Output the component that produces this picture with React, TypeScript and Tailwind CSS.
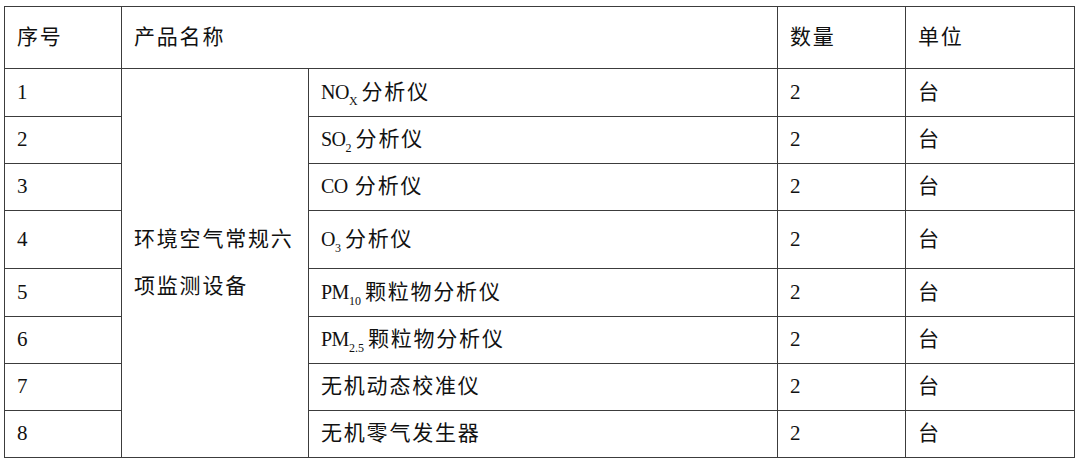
import React from 'react'

type Row = { no: number; name: React.ReactNode; h: string }

const lat = 'text-[20px] tracking-[-0.5px]'
const sub = 'text-[12px] relative top-[6px] leading-none tracking-[0px] mr-[4px]'

const rows: Row[] = [
  { no: 1, h: 'h-[48px]', name: <><span className={lat}>NO</span><span className={sub}>X</span>分析仪</> },
  { no: 2, h: 'h-[47px]', name: <><span className={lat}>SO</span><span className={sub}>2</span>分析仪</> },
  { no: 3, h: 'h-[47px]', name: <><span className={lat}>CO</span> 分析仪</> },
  { no: 4, h: 'h-[58px]', name: <><span className={lat}>O</span><span className={sub}>3</span>分析仪</> },
  { no: 5, h: 'h-[48px]', name: <><span className={lat}>PM</span><span className={sub}>10</span>颗粒物分析仪</> },
  { no: 6, h: 'h-[47px]', name: <><span className={lat}>PM</span><span className={sub}>2.5</span>颗粒物分析仪</> },
  { no: 7, h: 'h-[47px]', name: <>无机动态校准仪</> },
  { no: 8, h: 'h-[47px]', name: <>无机零气发生器</> },
]

const cell = 'border border-[#3c3c3c] px-[12px] align-middle text-left font-normal'

export default function App() {
  return (
    <div className="w-[1080px] h-[462px] bg-white pt-[6px] pl-[4px] text-[#111] text-[21px] tracking-[1.8px] font-['Liberation_Serif','Noto_Sans_CJK_SC',serif]">
      <table className="table-fixed border-collapse w-[1070px]">
        <colgroup>
          <col className="w-[117px]" />
          <col className="w-[187px]" />
          <col className="w-[469px]" />
          <col className="w-[128px]" />
          <col className="w-[169px]" />
        </colgroup>
        <thead>
          <tr className="h-[62px]">
            <th className={cell}>序号</th>
            <th className={cell} colSpan={2}>产品名称</th>
            <th className={cell}>数量</th>
            <th className={cell}>单位</th>
          </tr>
        </thead>
        <tbody>
          {rows.map((r, i) => (
            <tr key={r.no} className={r.h}>
              <td className={cell}>{r.no}</td>
              {i === 0 && (
                <td className={`${cell} leading-[47px]`} rowSpan={8}>
                  环境空气常规六
                  <br />
                  项监测设备
                </td>
              )}
              <td className={cell}>{r.name}</td>
              <td className={cell}>2</td>
              <td className={cell}>台</td>
            </tr>
          ))}
        </tbody>
      </table>
    </div>
  )
}
